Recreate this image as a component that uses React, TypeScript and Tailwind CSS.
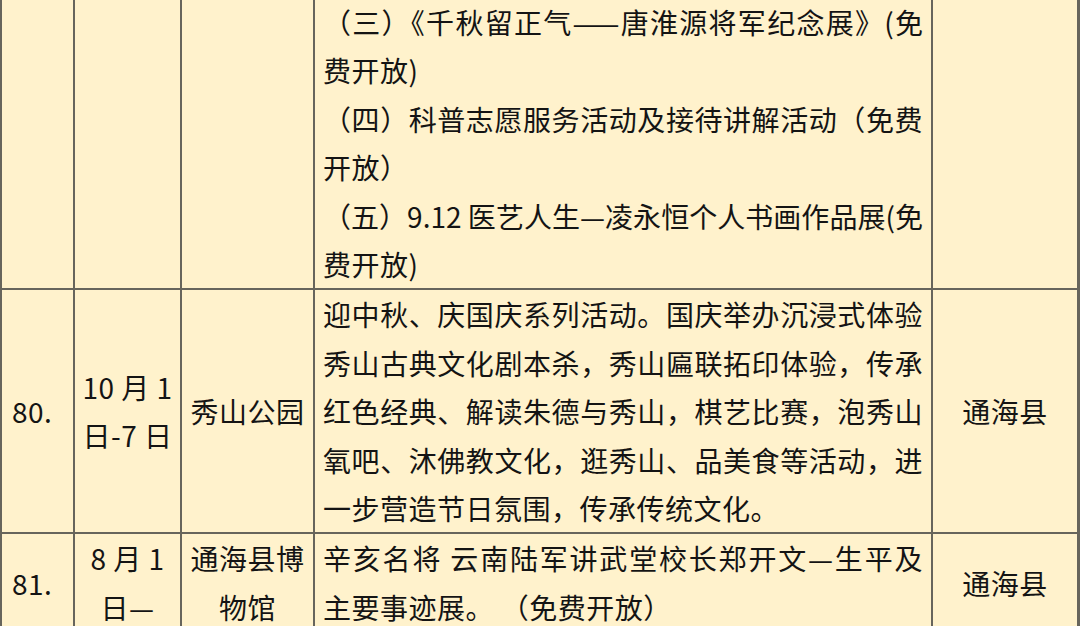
import React from "react";

type Line = { t: string; j?: boolean; ls?: string };

const J = "[text-align-last:justify] text-justify";

function Desc({ lines }: { lines: Line[] }) {
  return (
    <div className="bg-[#fff2cc] pl-[8px] pr-[8px]">
      {lines.map((l, i) => (
        <div
          key={i}
          className={l.j ? J : "text-left whitespace-pre"}
          style={l.ls ? { letterSpacing: l.ls } : undefined}
        >
          {l.t}
        </div>
      ))}
    </div>
  );
}

function Cell({
  children,
  align = "center",
}: {
  children?: React.ReactNode;
  align?: "center" | "left";
}) {
  return (
    <div
      className={
        align === "center"
          ? "bg-[#fff2cc] flex flex-col items-center justify-center text-center whitespace-pre"
          : "bg-[#fff2cc] flex flex-col justify-center pl-[10px]"
      }
    >
      {children}
    </div>
  );
}

export default function App() {
  return (
    <div className="w-[1080px] h-[626px] overflow-hidden bg-white">
      <div
        className="-mt-[2px] grid grid-cols-[71px_105px_131px_616px_144px] gap-[2px] bg-[#67655c] pl-[2px] pr-[3px] text-[28px] leading-[48.4px] tracking-[0.5px] text-[#141414]"
        style={{ fontFamily: '"Noto Sans CJK SC", "Noto Sans", sans-serif' }}
      >
        {/* continuing row */}
        <Cell />
        <Cell />
        <Cell />
        <Desc
          lines={[
            { t: "（三）《千秋留正气——唐淮源将军纪念展》(免", j: true, ls: "0px" },
            { t: "费开放)" },
            { t: "（四）科普志愿服务活动及接待讲解活动（免费", j: true },
            { t: "开放）" },
            { t: "（五）9.12 医艺人生—凌永恒个人书画作品展(免", j: true, ls: "0px" },
            { t: "费开放)" },
          ]}
        />
        <Cell />

        {/* row 80 */}
        <Cell align="left">80.</Cell>
        <Cell>
          <div>10 月 1</div>
          <div>日-7 日</div>
        </Cell>
        <Cell>秀山公园</Cell>
        <Desc
          lines={[
            { t: "迎中秋、庆国庆系列活动。国庆举办沉浸式体验", j: true },
            { t: "秀山古典文化剧本杀，秀山匾联拓印体验，传承", j: true },
            { t: "红色经典、解读朱德与秀山，棋艺比赛，泡秀山", j: true },
            { t: "氧吧、沐佛教文化，逛秀山、品美食等活动，进", j: true },
            { t: "一步营造节日氛围，传承传统文化。" },
          ]}
        />
        <Cell>通海县</Cell>

        {/* row 81 */}
        <Cell align="left">81.</Cell>
        <Cell>
          <div>8 月 1</div>
          <div>日—</div>
        </Cell>
        <Cell>
          <div>通海县博</div>
          <div>物馆</div>
        </Cell>
        <Desc
          lines={[
            { t: "辛亥名将 云南陆军讲武堂校长郑开文—生平及", j: true },
            { t: "主要事迹展。 （免费开放）" },
          ]}
        />
        <Cell>通海县</Cell>
      </div>
    </div>
  );
}
